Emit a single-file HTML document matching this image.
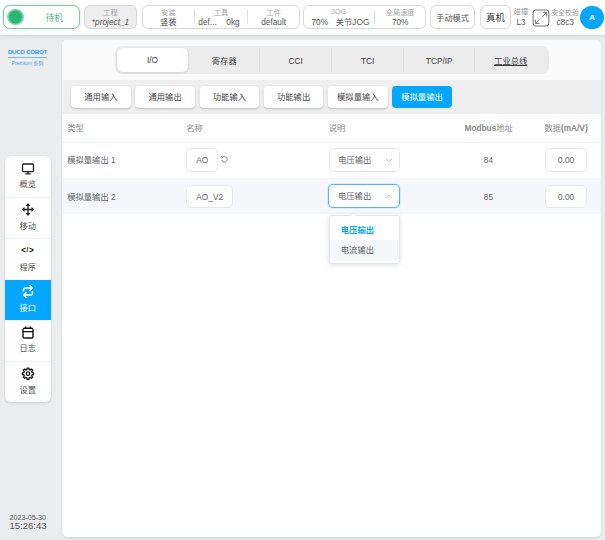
<!DOCTYPE html>
<html lang="zh-CN">
<head>
<meta charset="utf-8">
<title>DUCO COBOT - 接口 I/O</title>
<style>
*{box-sizing:border-box;margin:0;padding:0}
html,body{width:605px;height:540px;overflow:hidden}
body{position:relative;background:#ebecee;font-family:"Liberation Sans","Noto Sans CJK SC",sans-serif;font-size:8.3px;color:#444;line-height:1}
.abs{position:absolute}
.c{position:absolute;text-align:center;white-space:nowrap;transform:translate(-50%,-50%)}
.l{position:absolute;white-space:nowrap;transform:translateY(-50%)}
/* header */
#hdr{position:absolute;left:0;top:0;width:605px;height:34.5px;background:#fff;box-shadow:0 1px 4px rgba(0,0,0,.13)}
.box{position:absolute;top:5.2px;height:23.6px;border:1px solid #d9d9d9;border-radius:6px;background:#fff}
.lab{color:#a6a6a6;font-size:7.2px}
.val{color:#555;font-size:8.3px}
.vd{position:absolute;top:10px;height:14px;width:1px;background:#ddd}
/* sidebar */
#nav{position:absolute;left:4.7px;top:156.3px;width:46.1px;height:245.4px;background:#fff;border-radius:6px;box-shadow:0 1px 3px rgba(0,0,0,.12);overflow:hidden}
.ni{position:absolute;left:0;width:46.1px;height:41px;border-top:1px solid #f0f0f0}
.ni.on{background:#04a6fe;border-top:none}
.ni svg{position:absolute;left:50%;transform:translateX(-50%)}
.nl{position:absolute;left:0;width:100%;text-align:center;font-size:8.2px;color:#555}
.on .nl{color:#fff}
/* main */
#main{position:absolute;left:62.3px;top:40px;width:539.2px;height:496.9px;background:#fff;border-radius:5px;overflow:hidden;box-shadow:0 1px 2px rgba(0,0,0,.12)}
#top{position:absolute;left:0;top:0;width:100%;height:39.6px;background:#fafafa}
#sub{position:absolute;left:0;top:40px;width:100%;height:34px;background:#efeff0}

#tabs{position:absolute;left:52.4px;top:5.8px;width:434.2px;height:27.9px;background:#ececec;border-radius:7px}
.tab{position:absolute;top:0;height:27.9px;width:72.1px;text-align:center;line-height:30px;font-size:8.3px;color:#3a3a3a}
.tab.on{top:2.2px;height:23.8px;line-height:25px;background:#fff;border-radius:6px;box-shadow:0 1px 3px rgba(0,0,0,.12)}
.td{position:absolute;top:2px;height:24px;width:1px;background:#ddd}
.sb{position:absolute;top:45.8px;height:22.4px;width:59.6px;background:#fff;border-radius:4px;text-align:center;line-height:22.4px;font-size:8.3px;color:#444;box-shadow:0 1px 2px rgba(0,0,0,.22)}
.sb.on{background:#04a6fe;color:#fff;box-shadow:none}
.th{color:#888;font-size:8.3px}
.row{position:absolute;left:0;width:100%;height:36.3px}
.inp{position:absolute;height:23.6px;border:1px solid #e5e7ec;border-radius:5px;background:#fff;text-align:center;line-height:23.4px;font-size:8.3px;color:#606266}
</style>
</head>
<body>
<div id="hdr"></div>

<!-- status pill -->
<div class="box" style="left:3.3px;width:76.5px;top:5px;height:24px;border-color:#86c4a5;border-radius:7px;box-shadow:0 0 2px rgba(60,180,120,.45)"></div>
<div class="abs" style="left:7.1px;top:8.9px;width:16.6px;height:16.6px;border-radius:50%;background:radial-gradient(circle,#2db673 0,#2db673 50%,rgba(46,182,115,.6) 62%,rgba(46,182,115,.5) 88%,rgba(46,182,115,0) 100%)"></div>
<div class="c" style="left:54.2px;top:17.5px;font-size:8.6px;color:#4cb584">待机</div>

<!-- project -->
<div class="box" style="left:83.7px;width:53.3px;background:#eee;border-color:#d8d8d8"></div>
<div class="c lab" style="left:110.5px;top:12.7px">工程</div>
<div class="c val" style="left:110.5px;top:22.3px;font-style:italic">*project_1</div>

<!-- group -->
<div class="box" style="left:142px;width:158px"></div>
<div class="c lab" style="left:168.3px;top:12.7px">安装</div>
<div class="c val" style="left:168.3px;top:22.3px;color:#444">竖装</div>
<div class="vd" style="left:194px"></div>
<div class="c lab" style="left:221px;top:12.7px">工具</div>
<div class="l val" style="left:198.3px;top:22.3px">def...</div>
<div class="l val" style="left:226.3px;top:22.3px">0kg</div>
<div class="vd" style="left:247px"></div>
<div class="c lab" style="left:273.7px;top:12.7px">工件</div>
<div class="c val" style="left:273.7px;top:22.3px">default</div>

<!-- jog -->
<div class="box" style="left:303.4px;width:123px"></div>
<div class="c lab" style="left:338.7px;top:12.2px">JOG</div>
<div class="l val" style="left:311.5px;top:22.3px">70%</div>
<div class="l val" style="left:335.7px;top:22.3px">关节JOG</div>
<div class="vd" style="left:374px"></div>
<div class="c lab" style="left:400.2px;top:12.7px">全局速度</div>
<div class="c val" style="left:400.2px;top:22.3px">70%</div>

<!-- mode buttons -->
<div class="box" style="left:430.2px;width:44.7px"></div>
<div class="c val" style="left:452.5px;top:17.8px">手动模式</div>
<div class="box" style="left:480.4px;width:30.3px"></div>
<div class="c" style="left:495.5px;top:18.1px;font-size:9.4px;color:#333">真机</div>

<div class="c lab" style="left:521px;top:12.2px;font-size:7.2px;color:#8f8f8f">碰撞</div>
<div class="c val" style="left:521px;top:22px">L3</div>

<svg class="abs" style="left:532px;top:8.9px" width="18" height="18" viewBox="0 0 18 18">
<rect x="1.1" y="1" width="15.7" height="15.9" rx="2.6" fill="none" stroke="#777" stroke-width="1.05"/>
<path d="M10.2 7.6 L14.6 3.7 M10.9 3.6 H14.7 V7.5 M7.7 10.4 L3.4 14.3 M3.3 10.6 V14.4 H7.5" fill="none" stroke="#6a6a6a" stroke-width=".95"/>
</svg>

<div class="c lab" style="left:565px;top:12.5px;font-size:6.9px;color:#999">安全校验</div>
<div class="c val" style="left:565.2px;top:22px">c8c3</div>

<div class="abs" style="left:580.3px;top:5.5px;width:23.4px;height:23.4px;border-radius:50%;background:#04a6fe"></div>
<div class="c" style="left:592.2px;top:18.1px;font-size:8px;font-weight:bold;color:#fff">A</div>

<!-- logo -->
<div class="l" style="left:7.9px;top:52.3px;font-size:6.1px;font-weight:bold;color:#2d98ea;letter-spacing:-.27px">DUCO COBOT</div>
<div class="abs" style="left:8px;top:56.5px;width:39px;height:.9px;background:#74b8ea"></div>
<div class="c" style="left:27.5px;top:62.6px;font-size:5px;color:#3a9fea">Premium 系列</div>

<!-- nav -->
<div id="nav">
  <div class="ni" style="top:0;border-top:none">
    <svg style="top:6.5px" width="13" height="12" viewBox="0 0 13 12"><rect x="1" y="1" width="11" height="7.6" rx="1.2" fill="none" stroke="#222" stroke-width="1.4"/><path d="M6.5 8.6 V10.6 M3.8 10.9 H9.2" stroke="#222" stroke-width="1.4" fill="none"/></svg>
    <div class="nl" style="top:25.2px">概览</div>
  </div>
  <div class="ni" style="top:41px">
    <svg style="top:5px" width="13" height="13" viewBox="0 0 13 13"><path d="M6.5 1.5 V11.5 M1.5 6.5 H11.5" stroke="#222" stroke-width="1.3" fill="none"/><path d="M6.5 0 L9 3 H4 Z M6.5 13 L9 10 H4 Z M0 6.5 L3 4 V9 Z M13 6.5 L10 4 V9 Z" fill="#222"/></svg>
    <div class="nl" style="top:25px">移动</div>
  </div>
  <div class="ni" style="top:82px">
    <div class="abs" style="left:0;width:100%;top:6.2px;text-align:center;font-size:8.2px;line-height:10px;font-weight:bold;color:#111;letter-spacing:0.5px;white-space:nowrap">&lt;<span style="font-size:6.4px;vertical-align:0.6px;letter-spacing:0.5px">/</span>&gt;</div>
    <div class="nl" style="top:24.5px">程序</div>
  </div>
  <div class="ni on" style="top:123.3px;height:40.2px">
    <svg style="top:5px" width="12" height="13" viewBox="0 0 12 13"><path d="M1.5 6 V5 Q1.5 3 3.5 3 H10 M8 0.8 L10.3 3 L8 5.2 M10.5 7 V8 Q10.5 10 8.5 10 H2 M4 7.8 L1.7 10 L4 12.2" fill="none" stroke="#fff" stroke-width="1.5" stroke-linecap="round" stroke-linejoin="round"/></svg>
    <div class="nl" style="top:25px">接口</div>
  </div>
  <div class="ni" style="top:164px;border-top:none">
    <svg style="top:5.8px" width="12" height="13" viewBox="0 0 12 13"><rect x="1" y="2.2" width="10" height="9.8" rx="1.6" fill="none" stroke="#111" stroke-width="1.4"/><path d="M1 5.6 H11 M3.6 0.6 V3 M8.4 0.6 V3" stroke="#111" stroke-width="1.4" fill="none"/></svg>
    <div class="nl" style="top:25px">日志</div>
  </div>
  <div class="ni" style="top:204.5px">
    <svg style="top:5.2px" width="13.4" height="13.4" viewBox="0 0 24 24"><path d="M10.39 1.83 L13.61 1.83 L13.89 4.64 L15.87 5.46 L18.05 3.67 L20.33 5.95 L18.54 8.13 L19.36 10.11 L22.17 10.39 L22.17 13.61 L19.36 13.89 L18.54 15.87 L20.33 18.05 L18.05 20.33 L15.87 18.54 L13.89 19.36 L13.61 22.17 L10.39 22.17 L10.11 19.36 L8.13 18.54 L5.95 20.33 L3.67 18.05 L5.46 15.87 L4.64 13.89 L1.83 13.61 L1.83 10.39 L4.64 10.11 L5.46 8.13 L3.67 5.95 L5.95 3.67 L8.13 5.46 L10.11 4.64 Z" fill="none" stroke="#111" stroke-width="2.3" stroke-linejoin="round"/><circle cx="12" cy="12" r="3.1" fill="none" stroke="#111" stroke-width="2.2"/></svg>
    <div class="nl" style="top:25px">设置</div>
  </div>
</div>

<!-- time -->
<div class="l" style="left:9.5px;top:518.8px;font-size:7.15px;color:#555">2023-05-30</div>
<div class="l" style="left:9.5px;top:526.4px;font-size:9.5px;color:#555">15:26:43</div>

<!-- main panel -->
<div id="main">
  <div id="top"></div>
  <div id="sub"></div>
  <div id="tabs">
    <div class="tab on" style="left:2.2px;width:71.3px">I/O</div>
    <div class="tab" style="left:73.5px">寄存器</div>
    <div class="td" style="left:144.6px"></div>
    <div class="tab" style="left:145px">CCI</div>
    <div class="td" style="left:216.4px"></div>
    <div class="tab" style="left:217px">TCI</div>
    <div class="td" style="left:288.5px"></div>
    <div class="tab" style="left:288.5px">TCP/IP</div>
    <div class="td" style="left:359.4px"></div>
    <div class="tab" style="left:360px;text-decoration:underline">工业总线</div>
  </div>
  <div class="sb" style="left:8.8px">通用输入</div>
  <div class="sb" style="left:73px">通用输出</div>
  <div class="sb" style="left:137.3px">功能输入</div>
  <div class="sb" style="left:201.5px">功能输出</div>
  <div class="sb" style="left:265.7px">模拟量输入</div>
  <div class="sb on" style="left:329.9px">模拟量输出</div>

  <!-- table header -->
  <div class="l th" style="left:4.9px;top:88.3px">类型</div>
  <div class="l th" style="left:124px;top:88.3px">名称</div>
  <div class="l th" style="left:266.5px;top:88.3px">说明</div>
  <div class="c th" style="left:426.4px;top:88.3px;font-weight:bold">Modbus<span style="font-weight:normal">地址</span></div>
  <div class="c th" style="left:503.7px;top:88.3px;font-weight:bold"><span style="font-weight:normal">数据</span>(mA/V)</div>
  <div class="abs" style="left:0;top:101.7px;width:100%;height:1px;background:#eef0f4"></div>

  <!-- row 1 -->
  <div class="row" style="top:102.5px;border-bottom:1px solid #eef0f4"></div>
  <div class="l" style="left:4.9px;top:120.3px;color:#606266">模拟量输出 1</div>
  <div class="inp" style="left:124px;top:108.3px;width:31.7px">AO</div>
  <svg class="abs" style="left:157.9px;top:115.4px" width="8.8" height="8.8" viewBox="0 0 8 8"><path d="M2.2 2.1 A2.6 2.6 0 1 1 1.5 4.6" fill="none" stroke="#858585" stroke-width=".85"/><path d="M0.9 1.2 L2.3 2.3 L3.4 0.9" fill="none" stroke="#858585" stroke-width=".85"/></svg>
  <div class="inp" style="left:266.5px;top:108.3px;width:70.8px;text-align:left;padding-left:8.4px;border-radius:5px">电压输出</div>
  <svg class="abs" style="left:322.8px;top:117.8px" width="8" height="5" viewBox="0 0 8 5"><path d="M1 0.8 L4 3.8 L7 0.8" fill="none" stroke="#b4b8bf" stroke-width=".95"/></svg>
  <div class="c" style="left:426.2px;top:120.3px;color:#606266">84</div>
  <div class="inp" style="left:483px;top:108.3px;width:41.5px">0.00</div>

  <!-- row 2 -->
  <div class="row" style="top:138.3px;background:#f5f7fa;height:36px"></div>
  <div class="l" style="left:4.9px;top:156.5px;color:#606266">模拟量输出 2</div>
  <div class="inp" style="left:124px;top:144.5px;width:46.8px">AO_V2</div>
  <div class="inp" style="left:266.2px;top:144.3px;width:71.3px;height:24px;text-align:left;padding-left:8.5px;border-radius:5px;border-color:#55b6f5;box-shadow:0 0 2px rgba(24,160,246,.35)">电压输出</div>
  <svg class="abs" style="left:322.8px;top:153.8px" width="8" height="5" viewBox="0 0 8 5"><path d="M1 4.2 L4 1.2 L7 4.2" fill="none" stroke="#b4b8bf" stroke-width=".95"/></svg>
  <div class="c" style="left:426.2px;top:156.5px;color:#606266">85</div>
  <div class="inp" style="left:483px;top:144.5px;width:41.5px">0.00</div>

  <!-- dropdown -->
  <div class="abs" style="left:266.6px;top:175.2px;width:70.9px;height:49px;background:#fff;border:1px solid #e4e7ed;border-radius:2.5px;box-shadow:0 1px 5px rgba(0,0,0,.12)"></div>
  <div class="abs" style="left:289px;top:172.8px;width:5px;height:5px;background:#fff;border-left:1px solid #e4e7ed;border-top:1px solid #e4e7ed;transform:rotate(45deg)"></div>
  <div class="abs" style="left:268px;top:200px;width:68px;height:19.5px;background:#f5f7fa"></div>
  <div class="l" style="left:278.5px;top:190px;color:#04a6fe;font-weight:bold">电压输出</div>
  <div class="l" style="left:278.5px;top:210px;color:#606266">电流输出</div>
</div>
</body>
</html>
